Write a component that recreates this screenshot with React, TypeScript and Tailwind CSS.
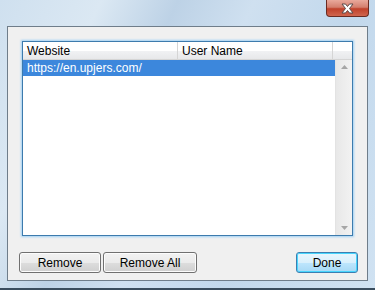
import React from "react";

const font = { fontFamily: '"Segoe UI", "Liberation Sans", Arial, sans-serif' };

function Btn({ label, w, primary }: { label: string; w: string; primary?: boolean }) {
  return (
    <div
      className={`${w} h-[21px] rounded-[3px] flex items-center justify-center text-[12px] text-black border ${
        primary
          ? "border-[#3c7fb1] shadow-[inset_0_0_0_1px_#48d5fd] bg-[linear-gradient(to_bottom,#eaf6fd_0%,#d9f0fc_50%,#bee6fd_51%,#a7d9f5_100%)]"
          : "border-[#707070] shadow-[inset_0_0_0_1px_#fcfcfc] bg-[linear-gradient(to_bottom,#f2f2f2_0%,#ebebeb_50%,#dddddd_51%,#cfcfcf_100%)]"
      }`}
    >
      {label}
    </div>
  );
}

export default function App() {
  return (
    <div
      className="w-[375px] h-[290px] flex flex-col overflow-hidden border-b-[2px] border-b-[#3a4d5e] bg-[linear-gradient(115deg,#cfe0ef_0%,#dbe8f3_20%,#bdd2e6_35%,#cfe0f0_50%,#c2d8ec_70%,#d0e2f2_100%)]"
      style={font}
    >
      <div className="h-[26px] shrink-0 flex justify-end pr-[6px]">
        <div className="w-[43px] h-[17px] rounded-b-[4px] border border-t-0 border-[#6a2b22] bg-[linear-gradient(to_bottom,#e9a99c_0%,#d47f6e_45%,#c0412b_55%,#d0664f_100%)] flex items-center justify-center">
          <svg width="15" height="11" viewBox="0 0 15 11">
            <path d="M2 1 L5.5 1 L7.5 3.5 L9.5 1 L13 1 L9.5 5.5 L13 10 L9.5 10 L7.5 7.5 L5.5 10 L2 10 L5.5 5.5 Z" fill="#ffffff" stroke="#5a4a4a" strokeWidth="1" strokeLinejoin="round" />
          </svg>
        </div>
      </div>
      <div className="flex-1 mx-[7px] mb-[7px] border border-[#6f7d8a] bg-[#f0f0f0] flex flex-col">
        <div className="mx-[14px] mt-[14px] h-[195px] border border-[#3d7bad] shadow-[0_0_2px_1px_#9fd0f5] bg-white flex flex-col">
          <div className="h-[18px] flex text-[12px] text-black border-b border-[#d5d5d5] bg-[linear-gradient(to_bottom,#ffffff_0%,#ffffff_50%,#f1f2f4_51%,#e7e8ea_100%)]">
            <div className="w-[155px] pl-[4px] flex items-center border-r border-[#d5d5d5] leading-none">Website</div>
            <div className="w-[155px] pl-[4px] flex items-center border-r border-[#d5d5d5] leading-none">User Name</div>
            <div className="flex-1" />
          </div>
          <div className="flex-1 flex">
            <div className="flex-1 flex flex-col">
              <div className="h-[16px] bg-[#3c87dc] text-white text-[12px] pl-[4px] flex items-center leading-none">
                https://en.upjers.com/
              </div>
            </div>
            <div className="w-[17px] bg-[linear-gradient(to_right,#e8e8e8,#f2f2f2)] border-l border-[#e3e3e3] flex flex-col justify-between items-center py-[5px]">
              <svg width="7" height="4" viewBox="0 0 7 4"><path d="M0 4 L3.5 0 L7 4 Z" fill="#a6a6a6" /></svg>
              <svg width="7" height="4" viewBox="0 0 7 4"><path d="M0 0 L3.5 4 L7 0 Z" fill="#a6a6a6" /></svg>
            </div>
          </div>
        </div>
        <div className="mt-[16px] pl-[11px] pr-[9px] flex items-center">
          <Btn label="Remove" w="w-[82px]" />
          <div className="w-[2px]" />
          <Btn label="Remove All" w="w-[94px]" />
          <div className="flex-1" />
          <Btn label="Done" w="w-[62px]" primary />
        </div>
      </div>
    </div>
  );
}
